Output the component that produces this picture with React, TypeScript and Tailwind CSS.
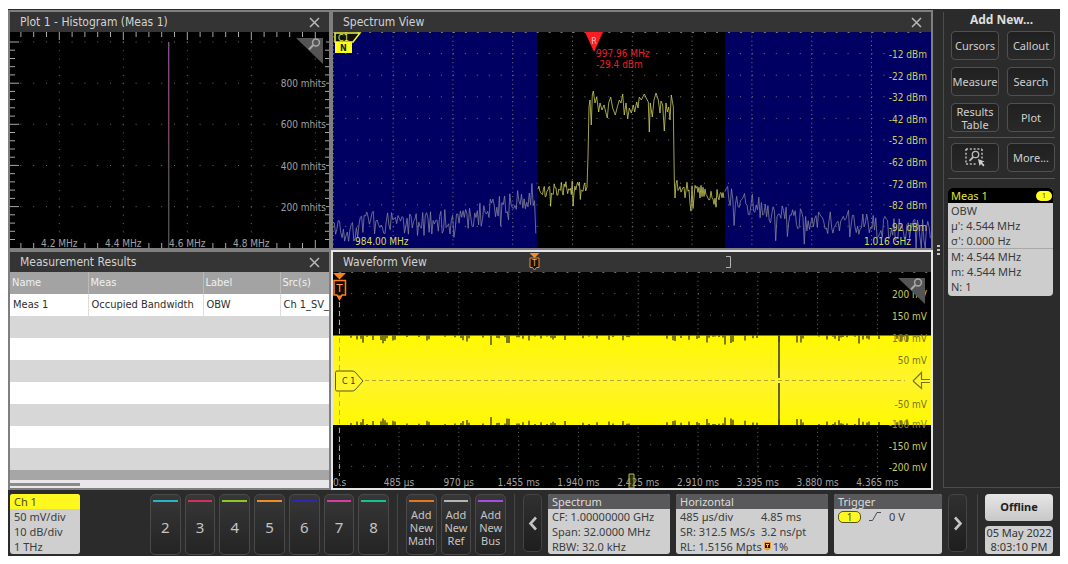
import React from "react";

const PLOT_FONT = "font-['DejaVu_Sans_Condensed','DejaVu_Sans',sans-serif]";
const UI_FONT = "font-['Noto_Sans','Open_Sans',sans-serif]";

function makeRandom(seed: number) {
  let s = seed;
  return () => {
    s = (s * 1664525 + 1013904223) % 4294967296;
    return s / 4294967296;
  };
}

const pct = (value: number, total: number) => `${(value / total) * 100}%`;

type Point = [number, number];

function interpolate(points: Point[], x: number) {
  for (let i = 1; i < points.length; i++) {
    const [x0, y0] = points[i - 1];
    const [x1, y1] = points[i];
    if (x <= x1) return y0 + ((y1 - y0) * (x - x0)) / (x1 - x0);
  }
  return points[points.length - 1][1];
}

function noise(base: Point[], from: number, to: number, step: number, amp: number, dip: number, seed: number) {
  const rnd = makeRandom(seed);
  const out: Point[] = [];
  for (let x = from; x <= to; x += step) {
    let y = interpolate(base, x) + (rnd() - 0.5) * 2 * amp;
    if (rnd() > 0.86) y += rnd() * dip;
    out.push([x, Math.min(y, 216)]);
  }
  return out;
}

const toPath = (pts: Point[]) => pts.map(([x, y], i) => `${i ? "L" : "M"}${x.toFixed(1)} ${y.toFixed(1)}`).join("");

const W = 598;
const H = 216;

const PLATEAU: Point[] = [
  [254, 155], [255, 125], [256, 75], [257, 68], [258.3, 93], [259.3, 63], [260.3, 59], [262, 71], [263.7, 65],
  [265.7, 80], [267, 71], [269, 78], [271, 73], [274.3, 86], [275.7, 71], [277.7, 65], [279.7, 76], [282.3, 83],
  [284.3, 75], [286.3, 68], [288, 71], [289.7, 62], [291.3, 83], [293, 71], [294.7, 87], [296.3, 76], [298.3, 81],
  [300.3, 73], [301.7, 80], [303.7, 70], [305, 76], [306.3, 65], [308.3, 68], [311.3, 62], [313.7, 67], [315.3, 70],
  [316.3, 100], [317.3, 71], [319.3, 85], [321, 68], [323, 61], [325.3, 68], [327, 81], [328, 69], [329.7, 73],
  [331.3, 99], [333, 71], [334.3, 80], [335.7, 75], [337, 88], [338.3, 63], [340.3, 75], [341.3, 148], [342, 166],
];

function Label({ x, y, w, h = H, fill, anchor = "middle", children }: {
  x: number; y: number; w: number; h?: number; fill: string;
  anchor?: "start" | "middle" | "end"; children: React.ReactNode;
}) {
  return (
    <text x={pct(x, w)} y={pct(y, h)} dy={4} fill={fill} textAnchor={anchor} className="text-[10px]">
      {children}
    </text>
  );
}

function Grid({ offset, color }: { offset: number; color: string }) {
  const cols = Array.from({ length: 10 }, (_, i) => offset + i * 59.8);
  const rows = Array.from({ length: 9 }, (_, i) => (i + 1) * 21.6);
  return (
    <g stroke={color} strokeWidth="1" fill="none">
      {cols.map((x) => (
        <path key={x} d={`M${x.toFixed(1)} 0V${H}`} strokeDasharray="1 3.32" />
      ))}
      {rows.map((y) => (
        <path key={y} d={`M${(offset % 11.96).toFixed(1)} ${y.toFixed(1)}H555`} strokeDasharray="1 10.96" />
      ))}
      <path d={`M${(offset % 11.96).toFixed(1)} .5H${W}`} strokeDasharray="2 9.96" />
    </g>
  );
}

function CloseButton({ label }: { label: string }) {
  return (
    <button type="button" aria-label={label} className="flex h-4 w-3 items-center justify-center text-[#b8b8b8]">
      <svg width="11" height="11" viewBox="0 0 11 11" fill="none" stroke="currentColor" strokeWidth="1.5">
        <path d="M1 1L10 10M10 1L1 10" />
      </svg>
    </button>
  );
}

function Panel({ title, closable, active, marks, children }: {
  title: string; closable?: boolean; active?: boolean; marks?: React.ReactNode; children: React.ReactNode;
}) {
  return (
    <section className={`flex min-h-0 min-w-0 flex-col border-2 ${active ? "border-[#e6e6e6]" : "border-[#807f80]"}`}>
      <header className="relative flex h-5 shrink-0 items-center justify-between bg-[#343434] pr-[9px] pl-2.5">
        <h2 className={`text-xs text-[#d2d2d2] ${PLOT_FONT}`}>{title}</h2>
        {marks}
        {closable && <CloseButton label={`Close ${title}`} />}
      </header>
      {children}
    </section>
  );
}

function ZoomCorner({ x, w }: { x: number; w: number }) {
  return (
    <svg x={pct(x, w)} y="5" width="28" height="28" viewBox="0 0 28 28">
      <path d="M0 1H27V27Z" fill="#545454" />
      <g fill="none" stroke="#a9a9a9">
        <circle cx="20" cy="5.5" r="3.4" strokeWidth="1.5" />
        <path d="M17.3 8L13 12.5" strokeWidth="2" />
      </g>
    </svg>
  );
}

function HistogramPlot() {
  const w = 319;
  const xs = Array.from({ length: 24 }, (_, i) => 10.9 + i * 12.8);
  const ys = Array.from({ length: 25 }, (_, i) => 10 + i * 8.23);
  const majorX = [49.3, 113.3, 177.3, 241.3, 305.3];
  const majorY = [10, 51.2, 92.3, 133.5, 174.6];
  return (
    <svg className={`min-h-0 w-full flex-1 bg-black ${PLOT_FONT}`} role="img" aria-label="Histogram of measurement 1">
      <svg width="100%" height="100%" viewBox={`0 0 ${w} ${H}`} preserveAspectRatio="none">
        <g stroke="#6a6a6a" fill="none">
          {majorX.map((x) => <path key={x} d={`M${x} 10V204`} strokeDasharray="1 7.23" />)}
          {majorY.map((y) => <path key={y} d={`M10.4 ${y}H272`} strokeDasharray="1 11.8" />)}
        </g>
        <g stroke="#a8a8a8">
          {xs.map((x, i) => <path key={x} d={`M${x.toFixed(1)} 0V${i % 5 === 3 ? 8 : 5}`} />)}
          {xs.filter((_, i) => [0, 1, 5, 6, 10, 11, 15, 16, 20, 21, 22, 23].includes(i)).map((x) => (
            <path key={x} d={`M${x.toFixed(1)} ${x > 304 ? 208 : 211}V216`} />
          ))}
          {ys.map((y, i) => (
            <path key={y} d={`M0 ${y.toFixed(1)}H${i % 5 === 0 ? 9 : 5}M${i % 5 === 0 ? 316 : 315} ${y.toFixed(1)}H319`} />
          ))}
        </g>
        <defs>
          <linearGradient id="bin" x1="0" y1="0" x2="0" y2="1">
            <stop offset="0" stopColor="#80508a" />
            <stop offset="0.4" stopColor="#7a4460" />
            <stop offset="0.65" stopColor="#555055" />
            <stop offset="1" stopColor="#505050" />
          </linearGradient>
        </defs>
        <rect x="158" y="10" width="1.4" height="206" fill="url(#bin)" />
      </svg>
      {["4.2 MHz", "4.4 MHz", "4.6 MHz", "4.8 MHz"].map((t, i) => (
        <Label key={t} x={majorX[i]} y={211} w={w} fill="#a0a0a0">{t}</Label>
      ))}
      {["800 mhits", "600 mhits", "400 mhits", "200 mhits"].map((t, i) => (
        <Label key={t} x={316} y={majorY[i + 1]} w={w} fill="#a0a0a0" anchor="end">{t}</Label>
      ))}
      <ZoomCorner x={286} w={w} />
    </svg>
  );
}

function SpectrumPlot() {
  const left: Point[] = [[0, 197], [20, 198], [40, 189], [68, 191], [85, 193], [120, 188], [145, 184], [160, 177], [180, 169], [204, 161]];
  const midLeft: Point[] = [[204, 161], [225, 158], [254, 153]];
  const midRight: Point[] = [[342, 155], [355, 157], [392, 166]];
  const right: Point[] = [[392, 165], [415, 171], [440, 184], [480, 190], [520, 190], [550, 195], [598, 197]];
  const center: Point[] = [
    ...noise(midLeft, 205, 253, 0.9, 7, 18, 12),
    ...PLATEAU,
    ...noise(midRight, 343, 391, 1, 7, 18, 47),
  ];
  return (
    <svg className={`min-h-0 w-full flex-1 bg-black ${PLOT_FONT}`} role="img" aria-label="Spectrum trace of channel 1">
      <svg width="100%" height="100%" viewBox={`0 0 ${W} ${H}`} preserveAspectRatio="none">
        <rect width="204" height={H} fill="#000063" />
        <rect x="392" width="206" height={H} fill="#000063" />
        <Grid offset={0.3} color="#7a7a72" />
        <g fill="none" strokeWidth="0.8" strokeLinejoin="bevel">
          <path d={toPath(noise(left, 0, 204, 1.3, 12, 30, 5))} stroke="#82829a" />
          <path d={toPath(noise(right, 392, 598, 1.3, 12, 30, 91))} stroke="#82829a" />
          <path d={toPath(center)} stroke="#cccc5c" />
        </g>
      </svg>
      <svg width="30" height="22" viewBox="0 0 30 22">
        <path d="M2 1H27L20 10H2Z" fill="#11110a" stroke="#f5f530" strokeWidth="1.5" />
        <text x="5" y="9" fill="#e8e84a" className="text-[9px]">C1</text>
        <rect x="2" y="10" width="17" height="11" fill="#ffff1e" />
        <text x="10.500" y="18.500" textAnchor="middle" fill="#222200" className="text-[9px] font-bold">N</text>
      </svg>
      <svg x={pct(251, W)} y="0" width="20" height="21" viewBox="0 0 20 21">
        <path d="M1 0H19L10 20Z" fill="#fb1c24" />
        <text x="10" y="12" textAnchor="middle" fill="#ffc0c0" className="text-[9px]">R</text>
      </svg>
      <Label x={263} y={20.5} w={W} fill="#ec1c24" anchor="start">997.96 MHz</Label>
      <Label x={263} y={31.5} w={W} fill="#ec1c24" anchor="start">-29.4 dBm</Label>
      {[12, 22, 32, 42, 52, 62, 72, 82, 92].map((v, i) => (
        <Label key={v} x={594} y={22 + i * 21.6} w={W} fill="#cccc5c" anchor="end">{`-${v} dBm`}</Label>
      ))}
      <Label x={22} y={208.5} w={W} fill="#dada50" anchor="start">984.00 MHz</Label>
      <Label x={578} y={208.5} w={W} fill="#dada50" anchor="end">1.016 GHz</Label>
    </svg>
  );
}

function WaveformPlot() {
  const rnd = makeRandom(77);
  const spikes: string[] = [];
  for (let x = 18; x < 590; x += 2) {
    const dense = 0.22 + 0.28 * Math.max(0, Math.sin(x / 26));
    const a = rnd();
    const len = 1 + rnd() * rnd() * 9;
    if (a < dense) {
      spikes.push(`M${x} 63.500v${len.toFixed(1)}`);
      spikes.push(`M${x} 153v-${(len * 0.85).toFixed(1)}`);
    }
  }
  const volts: [string, number, string][] = [
    ["200 mV", 22, "#c4cc5c"], ["150 mV", 43.5, "#c4cc5c"], ["100 mV", 66, "#77751c"], ["50 mV", 87.5, "#77751c"],
    ["-50 mV", 131.5, "#77751c"], ["-100 mV", 152, "#8a8830"], ["-150 mV", 174, "#c4cc5c"], ["-200 mV", 195, "#c4cc5c"],
  ];
  const times = ["485 µs", "970 µs", "1.455 ms", "1.940 ms", "2.425 ms", "2.910 ms", "3.395 ms", "3.880 ms", "4.365 ms"];
  return (
    <svg className={`min-h-0 w-full flex-1 bg-black ${PLOT_FONT}`} role="img" aria-label="Waveform of channel 1">
      <svg width="100%" height="100%" viewBox={`0 0 ${W} ${H}`} preserveAspectRatio="none">
        <defs>
          <linearGradient id="band" x1="0" y1="0" x2="0" y2="1">
            <stop offset="0" stopColor="#fff800" />
            <stop offset="0.5" stopColor="#fff42c" />
            <stop offset="1" stopColor="#fff800" />
          </linearGradient>
        </defs>
        <Grid offset={6.2} color="#6e6e64" />
        <rect y="63.500" width={W} height="89.500" fill="url(#band)" />
        <path d={spikes.join("")} stroke="#3a3800" strokeWidth="1.300" />
        <path d="M446 63.500V106M446 111V153" stroke="#3f3d10" strokeWidth="1.600" />
        <path d="M32 108.500H572" stroke="#b3ab30" strokeDasharray="4 3" />
        <path d="M6.500 30V204" stroke="#a8a890" strokeDasharray="5 4" />
      </svg>
      <svg x="0" y="0" width="15" height="30" viewBox="0 0 15 30">
        <path d="M0 1H13L6.500 7.500Z" fill="#ff7f1c" />
        <path d="M1 8.500H12.500V23H9L6.500 26.500L4 23H1Z" fill="#140b00" stroke="#ff7f1c" strokeWidth="1.500" />
        <path d="M3.500 23.500H9.500L6.500 29Z" fill="#ff7f1c" />
        <text x="6.500" y="20" textAnchor="middle" fill="#ffa850" className="text-[11px]">T</text>
      </svg>
      <svg x="1" y={pct(98, H)} width="31" height="22" viewBox="0 0 31 22">
        <path d="M3 1H18Q20 1 21 2L29 11L21 20Q20 21 18 21H3Q1.500 21 1.500 19.500V2.500Q1.500 1 3 1Z" fill="#fff52c" stroke="#59571a" />
        <text x="8" y="14" fill="#33320a" className="text-[9px]">C 1</text>
      </svg>
      {volts.map(([t, y, c]) => <Label key={t} x={594} y={y} w={W} fill={c} anchor="end">{t}</Label>)}
      <svg x={pct(579, W)} y={pct(99, H)} width="19" height="20" viewBox="0 0 19 20">
        <path d="M1 10L9.500 1.500V8.500H18M18 11.500H9.500V17.500L1 10" fill="none" stroke="#77740f" strokeWidth="1.200" />
      </svg>
      <Label x={0} y={209.5} w={W} fill="#a4a4a4" anchor="start">0.s</Label>
      {times.map((t, i) => <Label key={t} x={66 + i * 59.8} y={209.5} w={W} fill="#a4a4a4">{t}</Label>)}
      <svg x={pct(295, W)} y={pct(201, H)} width="7" height="16" viewBox="0 0 7 16">
        <path d="M1 1H6V15H1Z" fill="#4d5508" fillOpacity="0.500" stroke="#b5bf40" />
      </svg>
      <ZoomCorner x={565} w={W} />
    </svg>
  );
}

function WaveformMarks() {
  return (
    <svg className={`absolute inset-0 h-full w-full ${PLOT_FONT}`} aria-hidden="true">
      <svg x={pct(196, W)} y="1" width="11" height="18" viewBox="0 0 11 18">
        <path d="M.5 0H10.500L5.500 5Z" fill="#ff8a28" />
        <path d="M1 5H10V14.500H7.500L5.500 17L3.500 14.500H1Z" fill="#1b1208" stroke="#f08a34" />
        <text x="5.500" y="13" textAnchor="middle" fill="#f2b070" className="text-[8px]">T</text>
      </svg>
      <svg x={pct(392, W)} y="3" width="8" height="14" viewBox="0 0 8 14">
        <path d="M1 1.500H5.500V12.500H1" fill="none" stroke="#b4b4b4" />
      </svg>
    </svg>
  );
}

function ResultsTable() {
  const blank = Array.from({ length: 7 }, (_, i) => i);
  return (
    <div className={`flex min-h-0 flex-1 flex-col overflow-hidden bg-[#a6a6a6] text-[11px] ${PLOT_FONT}`}>
      <table className="w-full table-fixed border-collapse whitespace-nowrap">
        <colgroup>
          <col className="w-[78px]" /><col className="w-[115px]" /><col className="w-[77px]" /><col />
        </colgroup>
        <thead>
          <tr className="h-[22px] bg-[#a3a3a3] text-left text-[#f0f0f0]">
            {["Name", "Meas", "Label", "Src(s)"].map((t) => (
              <th key={t} scope="col" className="border-r border-[#bababa] pl-0.5 font-normal last:border-r-0">{t}</th>
            ))}
          </tr>
        </thead>
        <tbody>
          <tr className="h-[22px] bg-white text-[#2e2e2e]">
            {["Meas 1", "Occupied Bandwidth", "OBW", "Ch 1_SV_"].map((t) => (
              <td key={t} className="border-r border-[#dedede] pl-[3px] last:border-r-0">{t}</td>
            ))}
          </tr>
          {blank.map((i) => (
            <tr key={i} className="h-[22px] odd:bg-white even:bg-[#d7d7d7]"><td colSpan={4} /></tr>
          ))}
        </tbody>
      </table>
      <div className="mt-auto flex h-2 items-center bg-[#e9e7e9]">
        <div className="h-[3px] w-[22%] bg-[#8b8b8b]" />
      </div>
    </div>
  );
}

function SideButton({ label, children }: { label?: string; children: React.ReactNode }) {
  return (
    <button
      type="button"
      aria-label={label}
      className="flex h-[29px] items-center justify-center rounded border border-[#505050] bg-linear-to-b from-[#202020] to-[#292929] text-[11px] leading-[13px] text-[#cfcfcf]"
    >
      {children}
    </button>
  );
}

function Sidebar() {
  return (
    <aside className="mt-0.5 mb-0.5 flex w-[117px] shrink-0 flex-col border-b border-l border-[#4c4c4c] pr-[5px] pl-1">
      <h2 className="h-[19px] text-center text-xs leading-4 font-bold text-[#dedede]">Add New...</h2>
      <div className="grid grid-cols-2 gap-x-2 gap-y-[7px] pl-[3px]">
        <SideButton>Cursors</SideButton>
        <SideButton>Callout</SideButton>
        <SideButton>Measure</SideButton>
        <SideButton>Search</SideButton>
        <SideButton>Results<br />Table</SideButton>
        <SideButton>Plot</SideButton>
      </div>
      <div className="my-[5px] border-t border-[#555]" />
      <div className="grid grid-cols-2 gap-x-2 pl-[3px]">
        <SideButton label="Draw a box">
          <svg width="22" height="21" viewBox="0 0 22 21" fill="none" stroke="#bcbcbc">
            <path d="M2 2H18M2 17H13M2 2V17M18 2V12" strokeWidth="1.5" strokeDasharray="2 1.8" />
            <circle cx="11.500" cy="7.500" r="3.200" strokeWidth="1.300" />
            <path d="M9.200 10L5.500 13.800" strokeWidth="1.800" />
            <path d="M14 12L20.500 14.500L18 15.500L20.500 18L19.500 19.500L17 17L15.500 19Z" fill="#cfcfcf" stroke="none" />
          </svg>
        </SideButton>
        <SideButton>More...</SideButton>
      </div>
      <div className="mt-1.5 border-t border-[#555]" />
      <section className="mt-[9px] mr-0.5 overflow-hidden rounded bg-[#cdcdcd] text-[11px] leading-[15px] text-[#3a3a3a]">
        <header className="flex items-center justify-between bg-black pr-px pl-[3px] text-[#e4e431]">
          <h3>Meas 1</h3>
          <span className="flex h-2.5 w-4 items-center justify-center rounded-md bg-[#ffff20] text-[7px] leading-none text-[#4a4a00]">1</span>
        </header>
        <div className="px-[3px]">
          <p>OBW</p>
          <p>µ': 4.544 MHz</p>
          <p>σ': 0.000 Hz</p>
        </div>
        <div className="border-t border-[#a8a8a8] px-[3px] pb-0.5">
          <p>M: 4.544 MHz</p>
          <p>m: 4.544 MHz</p>
          <p>N: 1</p>
        </div>
      </section>
    </aside>
  );
}

function SlotButton({ bar, children }: { bar: string; children: React.ReactNode }) {
  return (
    <button
      type="button"
      className="flex h-[61px] min-w-0 flex-col items-center rounded-[5px] border border-[#4a4a4a] bg-linear-to-b from-[#373737] to-[#242424] px-0.5 pt-[5px] text-[#c4c4c4]"
    >
      <span className={`h-0.5 w-full ${bar}`} />
      <span className="flex flex-1 flex-col items-center justify-center pb-0.5">{children}</span>
    </button>
  );
}

function InfoCard({ title, className, head, children }: {
  title: string; className: string; head: string; children: React.ReactNode;
}) {
  return (
    <section className={`h-[60px] shrink-0 overflow-hidden rounded-[3px] bg-[#cfcfcf] text-[11px] leading-[15px] whitespace-nowrap text-[#3c3c3c] ${className}`}>
      <h3 className={`px-1 ${head}`}>{title}</h3>
      <div className="px-1">{children}</div>
    </section>
  );
}

function ScrollButton({ label, d }: { label: string; d: string }) {
  return (
    <button
      type="button"
      aria-label={label}
      className="flex h-[58px] w-[19px] shrink-0 items-center justify-center rounded-[5px] border border-[#444] bg-linear-to-b from-[#303030] to-[#1e1e1e] text-[#c4c4c4]"
    >
      <svg width="10" height="15" viewBox="0 0 10 15" fill="none" stroke="currentColor" strokeWidth="2.6"><path d={d} /></svg>
    </button>
  );
}

const GREY_HEAD = "bg-[#59595b] text-[#dcdcdc]";

function SettingsBar() {
  return (
    <footer className="flex h-[66px] shrink-0 items-start pt-1 pr-[7px] pl-0.5">
      <InfoCard title="Ch 1" className="w-[70px]" head="bg-[#fff81e] text-[#4a4a14]">
        <p>50 mV/div</p>
        <p>10 dB/div</p>
        <p>1 THz</p>
      </InfoCard>
      <div className="flex-1" />
      <div className="grid w-[239px] shrink-0 grid-cols-7 gap-1 text-[15px]">
        <SlotButton bar="bg-[#25b5c8]">2</SlotButton>
        <SlotButton bar="bg-[#d5305c]">3</SlotButton>
        <SlotButton bar="bg-[#8cc628]">4</SlotButton>
        <SlotButton bar="bg-[#f08c28]">5</SlotButton>
        <SlotButton bar="bg-[#2d28b0]">6</SlotButton>
        <SlotButton bar="bg-[#d83ca0]">7</SlotButton>
        <SlotButton bar="bg-[#10c490]">8</SlotButton>
      </div>
      <div className="mx-2 h-[60px] border-l border-[#454545]" />
      <div className="grid w-[100px] shrink-0 grid-cols-3 gap-1 text-[11px] leading-[13px]">
        <SlotButton bar="bg-[#e8761c]"><span>Add</span><span>New</span><span>Math</span></SlotButton>
        <SlotButton bar="bg-[#b4b4b4]"><span>Add</span><span>New</span><span>Ref</span></SlotButton>
        <SlotButton bar="bg-[#a44de0]"><span>Add</span><span>New</span><span>Bus</span></SlotButton>
      </div>
      <div className="mx-2 h-[60px] border-l border-[#454545]" />
      <div className="flex shrink-0 gap-1.5">
        <ScrollButton label="Previous settings" d="M8 1.5L2.500 7.500L8 13.500" />
        <InfoCard title="Spectrum" className="w-[122px]" head={GREY_HEAD}>
          <p>CF: 1.00000000 GHz</p>
          <p>Span: 32.0000 MHz</p>
          <p>RBW: 32.0 kHz</p>
        </InfoCard>
        <InfoCard title="Horizontal" className="w-[152px]" head={GREY_HEAD}>
          <div className="grid grid-cols-[81px_1fr]">
            <p>485 µs/div</p>
            <p>4.85 ms</p>
            <p>SR: 312.5 MS/s</p>
            <p>3.2 ns/pt</p>
          </div>
          <p className="flex items-center gap-0.5">
            RL: 1.5156 Mpts
            <svg width="7" height="9" viewBox="0 0 7 9" aria-hidden="true">
              <path d="M0 0H7V6.500L3.500 9L0 6.500Z" fill="#f0a030" />
              <path d="M1 1H6V6H1Z" fill="#2a1a00" />
              <path d="M2 2.500H5M3.500 2.500V5.500" stroke="#f6b860" />
            </svg>
            <span>1%</span>
          </p>
        </InfoCard>
        <InfoCard title="Trigger" className="w-[108px]" head={GREY_HEAD}>
          <p className="flex items-center gap-2">
            <span className="flex h-3 w-[23px] items-center justify-center rounded-[5px] border border-[#55541c] bg-[#fff820] text-[10px] leading-none text-[#4a4a14]">1</span>
            <svg width="12" height="9" viewBox="0 0 12 9" fill="none" stroke="#4a4a58"><path d="M0 8.500H3.500L8 .5H12" /></svg>
            0 V
          </p>
        </InfoCard>
        <ScrollButton label="Next settings" d="M2 1.500L7.500 7.500L2 13.500" />
      </div>
      <div className="mr-[7px] ml-2.5 h-[60px] border-l border-[#454545]" />
      <div className="flex w-[68px] shrink-0 flex-col gap-[5px] text-center text-[11px] text-[#333]">
        <button type="button" className="h-[27px] rounded bg-linear-to-b from-[#e6e6e6] to-[#c8c8c8] font-bold text-[#202020]">Offline</button>
        <time className="h-7 rounded bg-[#cfcfcf] leading-[14px] whitespace-nowrap">05 May 2022<br />8:03:10 PM</time>
      </div>
    </footer>
  );
}

export default function App() {
  return (
    <div className={`flex h-screen min-h-[480px] flex-col bg-white px-2 pt-[9px] pb-2 ${UI_FONT}`}>
      <main className="flex min-h-0 flex-1 flex-col overflow-hidden bg-[#2b2b2b]">
        <div className="flex min-h-0 flex-1 pt-px">
          <div className="grid min-h-0 min-w-0 flex-1 grid-cols-[323fr_602fr] grid-rows-2">
            <Panel title="Plot 1 - Histogram (Meas 1)" closable><HistogramPlot /></Panel>
            <Panel title="Spectrum View" closable><SpectrumPlot /></Panel>
            <Panel title="Measurement Results" closable><ResultsTable /></Panel>
            <Panel title="Waveform View" active marks={<WaveformMarks />}><WaveformPlot /></Panel>
          </div>
          <div className="flex w-2.5 shrink-0 flex-col items-center justify-center gap-0.5">
            <span className="h-0.5 w-[3px] bg-[#c4c4c4]" />
            <span className="h-0.5 w-[3px] bg-[#c4c4c4]" />
            <span className="h-0.5 w-[3px] bg-[#c4c4c4]" />
          </div>
          <Sidebar />
        </div>
        <SettingsBar />
      </main>
    </div>
  );
}
